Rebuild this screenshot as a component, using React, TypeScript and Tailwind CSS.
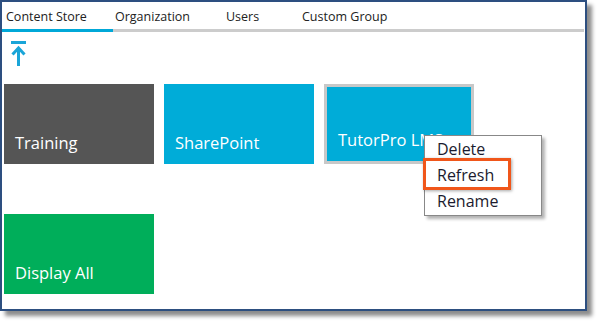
import React from "react";

const font = { fontFamily: '"Open Sans", "Noto Sans", sans-serif' };

function Tile({ label, className }: { label: string; className: string }) {
  return (
    <div className={`flex h-[80px] w-[150px] items-end pb-[8px] pl-[11px] text-[16.5px] text-white ${className}`}>
      {label}
    </div>
  );
}

export default function App() {
  return (
    <div className="relative h-[326px] w-[603px] bg-white" style={font}>
      <div className="h-[311px] w-[587px] border-2 border-[#2d4f80] bg-white shadow-[5px_5px_4px_rgba(0,0,0,0.45)]">
        {/* tabs */}
        <div className="mr-[1px] flex border-b-[3px] border-[#cccccc] pt-[5px] text-[12.5px] leading-[20px] text-[#222]">
          <div className="-mb-[3px] w-[111px] border-b-[3px] border-[#00a8d8] pb-[2px] pl-[4px]">Content Store</div>
          <div className="w-[111px] pl-[2px]">Organization</div>
          <div className="w-[76px] pl-[2px]">Users</div>
          <div className="pl-[2px]">Custom Group</div>
        </div>

        {/* up arrow */}
        <svg className="ml-[9px] mt-[9px]" width="16" height="26" viewBox="0 0 16 26">
          <rect x="0" y="0" width="15" height="3" fill="#1aa5d8" />
          <path d="M7.5 25V7 M1.5 13.5L7.5 7L13.5 13.5" stroke="#1aa5d8" strokeWidth="3" fill="none" />
        </svg>

        {/* tiles */}
        <div className="mt-[17px] flex flex-col gap-[50px] pl-[2px]">
          <div className="flex gap-[10px]">
            <Tile label="Training" className="bg-[#555555]" />
            <Tile label="SharePoint" className="bg-[#00acd8]" />
            <Tile label="TutorPro LMS" className="border-[3px] border-[#c8c8c8] bg-[#00acd8] pb-[5px] pl-[7px]" />
          </div>
          <div className="flex">
            <Tile label="Display All" className="bg-[#00ae5a]" />
          </div>
        </div>
      </div>

      {/* context menu */}
      <div className="absolute left-[424px] top-[135px] flex h-[81px] w-[118px] flex-col border border-[#888] bg-white pl-[12px] text-[16px] leading-[26px] text-[#1b1b2e] shadow-[3px_3px_3px_rgba(0,0,0,0.3)]">
        <div>Delete</div>
        <div>Refresh</div>
        <div>Rename</div>
      </div>
      <div className="absolute left-[423px] top-[158px] h-[32px] w-[88px] border-[3px] border-[#f0561a] shadow-[1px_1px_3px_rgba(0,0,0,0.35)]" />
    </div>
  );
}
